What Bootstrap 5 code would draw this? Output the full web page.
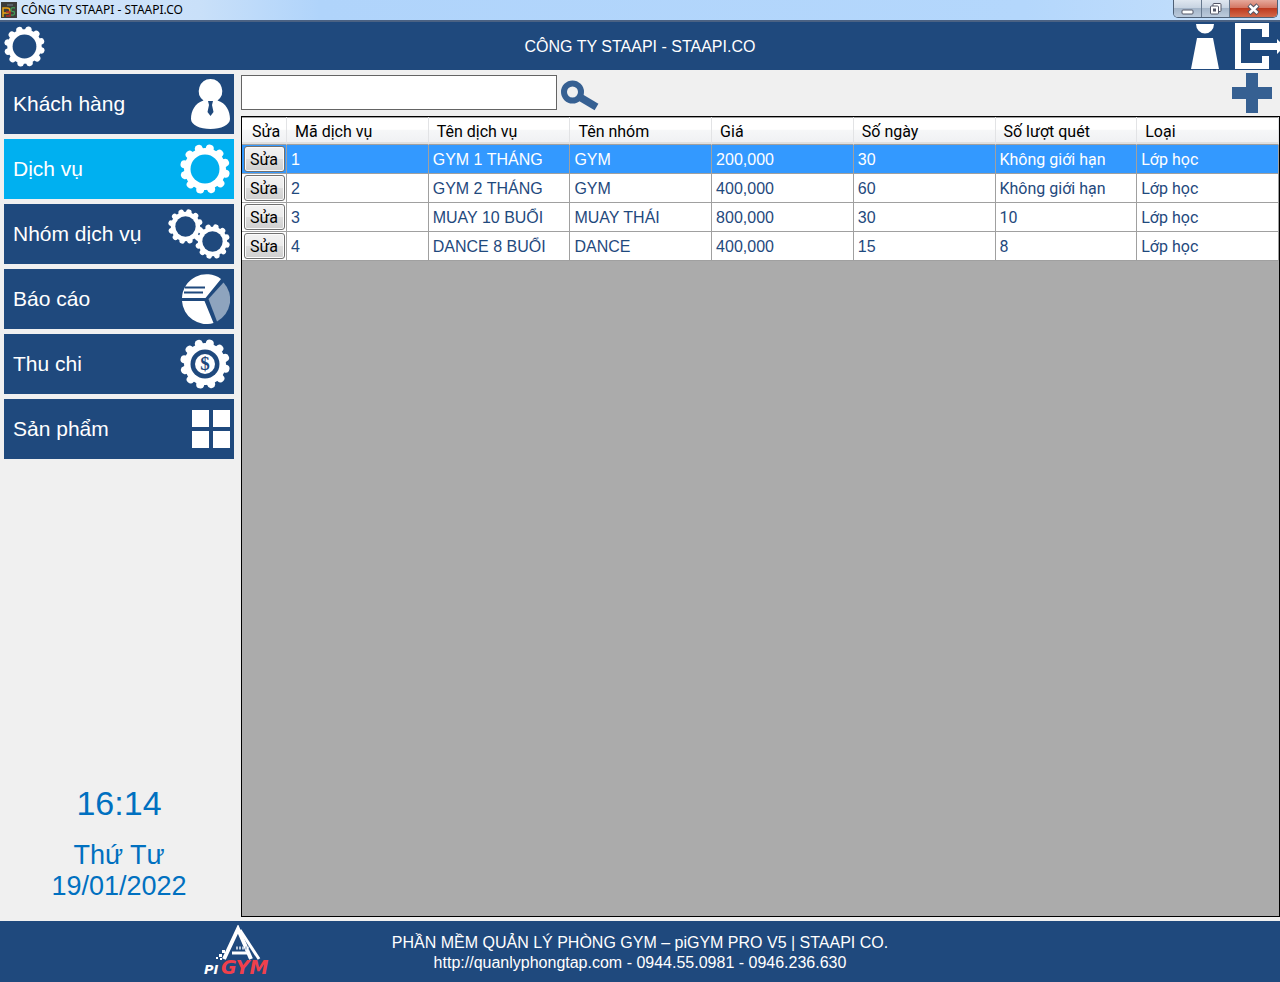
<!DOCTYPE html>
<html lang="vi">
<head>
<meta charset="utf-8">
<meta name="viewport" content="width=device-width, initial-scale=1">
<title>CÔNG TY STAAPI - STAAPI.CO</title>
<link href="https://cdn.jsdelivr.net/npm/bootstrap@5.3.0/dist/css/bootstrap.min.css" rel="stylesheet">
<style>
:root { --navy: #1f497d; --steel: #366092; --cyan: #00b0f0; --face: #f0f0f0; }
body { background: var(--face); font-family: "Liberation Sans", Arial, sans-serif; font-size: 16px; line-height: 20px; }
svg { display: block; flex: none; }
.titlebar { height: 22px; padding-left: 1px; font: 12px/20px "Noto Sans", sans-serif; color: #000; background: linear-gradient(90deg, #d3e6fa 0, #c9e0f9 200px, #b0d4fb 320px, #b4d7fc 80%, #c6e0fb); border-bottom: 2px solid #4b6283; }
.winbtns { height: 18px; border: 1px solid #4e6076; border-top: 0; border-radius: 0 0 5px 5px; overflow: hidden; margin-right: 2px; }
.winbtn { border: 0; border-right: 1px solid #66788e; padding: 0; width: 28px; display: flex; align-items: center; justify-content: center; background: linear-gradient(#dfe7f0 0, #c8d4e2 45%, #a4b5c9 50%, #bccbdc); }
.winbtn.shut { width: 47px; border-right: 0; background: linear-gradient(#e6a99c 0, #d47764 45%, #bd3a20 50%, #d36a4c); }
.appbar { height: 48px; background: var(--navy); color: #fff; display: grid; grid-template-columns: 1fr auto 1fr; align-items: center; }
.appbar-title { padding-top: 2px; }
.plain { border: 0; padding: 0; background: none; color: inherit; }
.sidebar { width: 234px; padding: 4px 0 0 4px; }
.menu { gap: 5px; }
.menu-item { height: 60px; padding: 0 4px 0 9px; background: var(--navy); color: #fff; font-size: 21px; text-decoration: none; display: flex; align-items: center; justify-content: space-between; }
.menu-item:hover { color: #fff; }
.menu-item.active { background: var(--cyan); }
.clock { color: #0070c0; font-size: 27px; line-height: 31px; padding-bottom: 19px; }
.clock time { display: block; }
.clock .hours { font-size: 34px; line-height: 40px; margin-bottom: 17px; }
.work { margin-left: 7px; }
.search { width: 316px; height: 35px; border: 1px solid #646464; border-radius: 0; padding: 4px 8px; background: #fff; }
.tools { height: 46px; padding: 0 8px 1px 0; }
.gridbox { background: #ababab; border: 1px solid #000; margin-bottom: 4px; }
.services { width: 100%; table-layout: fixed; border-collapse: separate; border-spacing: 0; color: var(--navy); }
.services th, .services .edit, .services td:nth-child(n+7) { font-family: Roboto, sans-serif; }
.services th { height: 28px; padding: 3px 0 0 8px; font-weight: 400; color: #000; white-space: nowrap; background: linear-gradient(#fff 0, #fff 45%, #f6f7f8 50%, #eff0f2); border-right: 1px solid #e2e3e5; border-bottom: 1px solid #a0a0a0; box-shadow: inset 0 1px #a0a0a0, inset 0 -2px #e0e0e0; }
.services td { height: 29px; padding: 2px 0 0 4px; background: #fff; border-right: 1px solid #a0a0a0; border-bottom: 1px solid #a0a0a0; white-space: nowrap; }
.services .picked td { background: #39f; color: #fff; }
.services .edit-col { width: 45px; padding: 0 1px 0 2px; }
.services th.edit-col { padding: 3px 0 0 10px; }
.edit { display: block; width: 100%; height: 26px; padding: 1px 1px 0 0; line-height: 20px; color: #000; border: 1px solid #707070; border-radius: 3px; box-shadow: inset 0 0 0 1px #fbfbfb; background: linear-gradient(#f2f2f2 0, #ebebeb 50%, #ddd 50%, #cfcfcf); }
.foot { height: 61px; background: var(--navy); color: #fff; display: grid; grid-template-columns: 1fr auto 1fr; align-items: center; }
.foot-text { padding-top: 2px; }
.brand-logo { margin: 0 115px 0 auto; }
</style>
</head>
<body class="min-vh-100 d-flex flex-column">
<svg width="0" height="0" class="position-absolute" aria-hidden="true">
  <defs>
    <g id="teeth" stroke="#fff" stroke-width="16" stroke-linecap="round">
      <path d="M50 8V92M8 50H92M29 13.600L71 86.400M71 13.600L29 86.400M13.600 29L86.400 71M13.600 71L86.400 29"/>
    </g>
    <mask id="hole"><rect x="-5" y="-5" width="110" height="110" fill="#fff"/><circle cx="50" cy="50" r="29" fill="#000"/></mask>
    <g id="gear" mask="url(#hole)"><use href="#teeth" transform="rotate(13 50 50)"/><circle cx="50" cy="50" r="42" fill="#fff"/></g>
  </defs>
</svg>

<div class="titlebar d-flex justify-content-between">
  <div class="d-flex align-items-center gap-1">
    <svg width="16" height="16" viewBox="0 0 16 16"><path fill="#3d3d3b" d="M0 0h16v16H0z"/><path d="M2 15V6h4q3 0 3 2.500T6 11H2" fill="none" stroke="#e8a317" stroke-width="1.500"/><path d="M14 6q-4-1-4 1.500t3 2q2 4-3 3.500" fill="none" stroke="#3f9a56" stroke-width="1.300"/><path d="M5 10h4v4H5" fill="none" stroke="#b52a26" stroke-width="1.300"/><path d="M7 2v2M9 2v2M11 2v2" stroke="#758596"/></svg>
    <span>CÔNG TY STAAPI - STAAPI.CO</span>
  </div>
  <div class="winbtns d-flex">
    <button class="winbtn" aria-label="Minimize"><svg width="13" height="14" viewBox="0 0 13 14"><rect x="1" y="8" width="11" height="4" rx="1" fill="#fff" stroke="#535666"/></svg></button>
    <button class="winbtn" aria-label="Restore"><svg width="13" height="14" viewBox="0 0 13 14"><g fill="#fff" stroke="#535666"><rect x="4" y="1.500" width="8" height="8" rx="1"/><rect x="1.500" y="4" width="8" height="8" rx="1"/><rect x="4.500" y="7" width="2" height="2"/></g></svg></button>
    <button class="winbtn shut" aria-label="Close"><svg width="13" height="14" viewBox="0 0 13 14"><path d="M2 3L11 11.500M11 3L2 11.500" stroke="#535666" stroke-width="4.500"/><path d="M2.500 3.500L10.500 11M10.500 3.500L2.500 11" stroke="#fff" stroke-width="2.500"/></svg></button>
  </div>
</div>

<header class="appbar">
  <button class="plain ms-1 me-auto" aria-label="Settings"><svg width="41" height="41" viewBox="0 0 100 100"><use href="#gear"/></svg></button>
  <span class="appbar-title">CÔNG TY STAAPI - STAAPI.CO</span>
  <div class="d-flex justify-content-end">
    <button class="plain" aria-label="Account"><svg width="44" height="46" viewBox="0 0 44 46"><path fill="#fff" d="M5 1h18a9 9.500 0 0 1-18 0zM6 15h16l6 31H0z"/></svg></button>
    <button class="plain" aria-label="Log out"><svg width="45" height="46" viewBox="0 0 45 46"><path fill="#fff" d="M0 0h34v14h-7V6H6v34h21v-7h7v13H0zM15 20h27v-4l3 3v9l-3 3v-4H15z"/></svg></button>
  </div>
</header>

<div class="d-flex flex-grow-1">
  <aside class="sidebar d-flex flex-column flex-shrink-0 justify-content-between">
    <nav class="menu d-flex flex-column">
      <a class="menu-item" href="#">Khách hàng <svg width="39" height="50" viewBox="0 0 39 50"><path fill="#fff" d="M19.500 0a12 12 0 0 1 7 21.500C35 24 39 32 39 40c0 6-9 10-19.500 10S0 46 0 40c0-8 4-16 12.500-18.500A12 12 0 0 1 19.500 0z"/><path fill="#1f497d" d="M17 22h5l-1 4 1.500 7-3 4-3-4 1.500-7z"/></svg></a>
      <a class="menu-item active" href="#" aria-current="page">Dịch vụ <svg width="50" height="50" viewBox="0 0 100 100"><use href="#gear"/></svg></a>
      <a class="menu-item" href="#">Nhóm dịch vụ <svg width="62" height="50" viewBox="0 0 62 50"><use href="#gear" transform="scale(.35)"/><circle cx="45" cy="33" r="14" fill="#1f497d"/><use href="#gear" transform="translate(27 15) scale(.35)"/></svg></a>
      <a class="menu-item" href="#">Báo cáo <svg width="48" height="50" viewBox="0 0 48 50"><path fill="#fff" d="M39 5L23.500 24H0A24.500 24.500 0 0 1 39 5zM0 27h22.500l9 22A24.500 24.500 0 0 1 0 27z"/><path fill="#8ea4be" d="M41.500 8.500a25 25 0 0 1-6.500 39L26.500 25z"/><path stroke="#1f497d" stroke-width="2" d="M3 13.500h20M2 18.500h19"/></svg></a>
      <a class="menu-item" href="#">Thu chi <svg width="50" height="50" viewBox="0 0 100 100"><use href="#gear"/><circle cx="50" cy="50" r="20" fill="#fff"/><text x="50" y="62" text-anchor="middle" font-family="Liberation Serif, serif" font-weight="700" font-size="38" fill="#1f497d">$</text></svg></a>
      <a class="menu-item" href="#">Sản phẩm <svg width="39" height="38" viewBox="0 0 39 38"><path fill="#fff" d="M1 0h17v17H1zM22 0h17v17H22zM1 21h17v17H1zM22 21h17v17H22z"/></svg></a>
    </nav>
    <div class="clock text-center">
      <time class="hours">16:14</time>
      <div>Thứ Tư</div>
      <time datetime="2022-01-19">19/01/2022</time>
    </div>
  </aside>

  <main class="work d-flex flex-column flex-grow-1">
    <div class="tools d-flex align-items-center">
      <input class="search" type="search" aria-label="Tìm kiếm dịch vụ">
      <button class="plain ms-1" aria-label="Tìm kiếm"><svg width="38" height="36" viewBox="0 0 38 36"><circle cx="11.500" cy="17" r="8.500" fill="none" stroke="#366092" stroke-width="6"/><path d="M17 21L35.500 32" stroke="#366092" stroke-width="7.500"/></svg></button>
      <button class="plain ms-auto" aria-label="Thêm dịch vụ"><svg width="40" height="40" viewBox="0 0 40 40"><path fill="#366092" d="M14 0h12v14h14v12H26v14H14V26H0V14h14z"/></svg></button>
    </div>
    <div class="gridbox flex-grow-1">
      <table class="services">
        <thead><tr><th class="edit-col">Sửa</th><th>Mã dịch vụ</th><th>Tên dịch vụ</th><th>Tên nhóm</th><th>Giá</th><th>Số ngày</th><th>Số lượt quét</th><th>Loại</th></tr></thead>
        <tbody>
          <tr class="picked"><td class="edit-col"><button class="edit">Sửa</button></td><td>1</td><td>GYM 1 THÁNG</td><td>GYM</td><td>200,000</td><td>30</td><td>Không giới hạn</td><td>Lớp học</td></tr>
          <tr><td class="edit-col"><button class="edit">Sửa</button></td><td>2</td><td>GYM 2 THÁNG</td><td>GYM</td><td>400,000</td><td>60</td><td>Không giới hạn</td><td>Lớp học</td></tr>
          <tr><td class="edit-col"><button class="edit">Sửa</button></td><td>3</td><td>MUAY 10 BUỔI</td><td>MUAY THÁI</td><td>800,000</td><td>30</td><td>10</td><td>Lớp học</td></tr>
          <tr><td class="edit-col"><button class="edit">Sửa</button></td><td>4</td><td>DANCE 8 BUỔI</td><td>DANCE</td><td>400,000</td><td>15</td><td>8</td><td>Lớp học</td></tr>
        </tbody>
      </table>
    </div>
  </main>
</div>

<footer class="foot">
  <svg class="brand-logo" width="74" height="54" viewBox="0 0 74 54" role="img" aria-label="piGYM">
    <g fill="none" stroke="#fff" stroke-width="4"><path d="M21 34L35 4l13 30"/><path d="M37 5l19 29" stroke-width="3"/><path d="M29 28h17" stroke-width="3"/></g>
    <path fill="#fff" d="M19 25h3v3h-3zM16 29h3v3h-3zM13 32h2v2h-2zM17 33h2v2h-2z"/>
    <path d="M33 23h13" stroke="#b9c8da" stroke-width="3" stroke-dasharray="2 1"/>
    <g font-family="DejaVu Sans, sans-serif" font-weight="700" font-style="italic"><text x="1" y="49" font-size="13" fill="#fff">PI</text><text x="18" y="49" font-size="19" fill="#f0404c">GYM</text></g>
  </svg>
  <div class="foot-text text-center">PHẦN MỀM QUẢN LÝ PHÒNG GYM – piGYM PRO V5 | STAAPI CO.<br>http://quanlyphongtap.com - 0944.55.0981 - 0946.236.630</div>
</footer>
<script src="https://cdn.jsdelivr.net/npm/bootstrap@5.3.0/dist/js/bootstrap.bundle.min.js"></script>
</body>
</html>
